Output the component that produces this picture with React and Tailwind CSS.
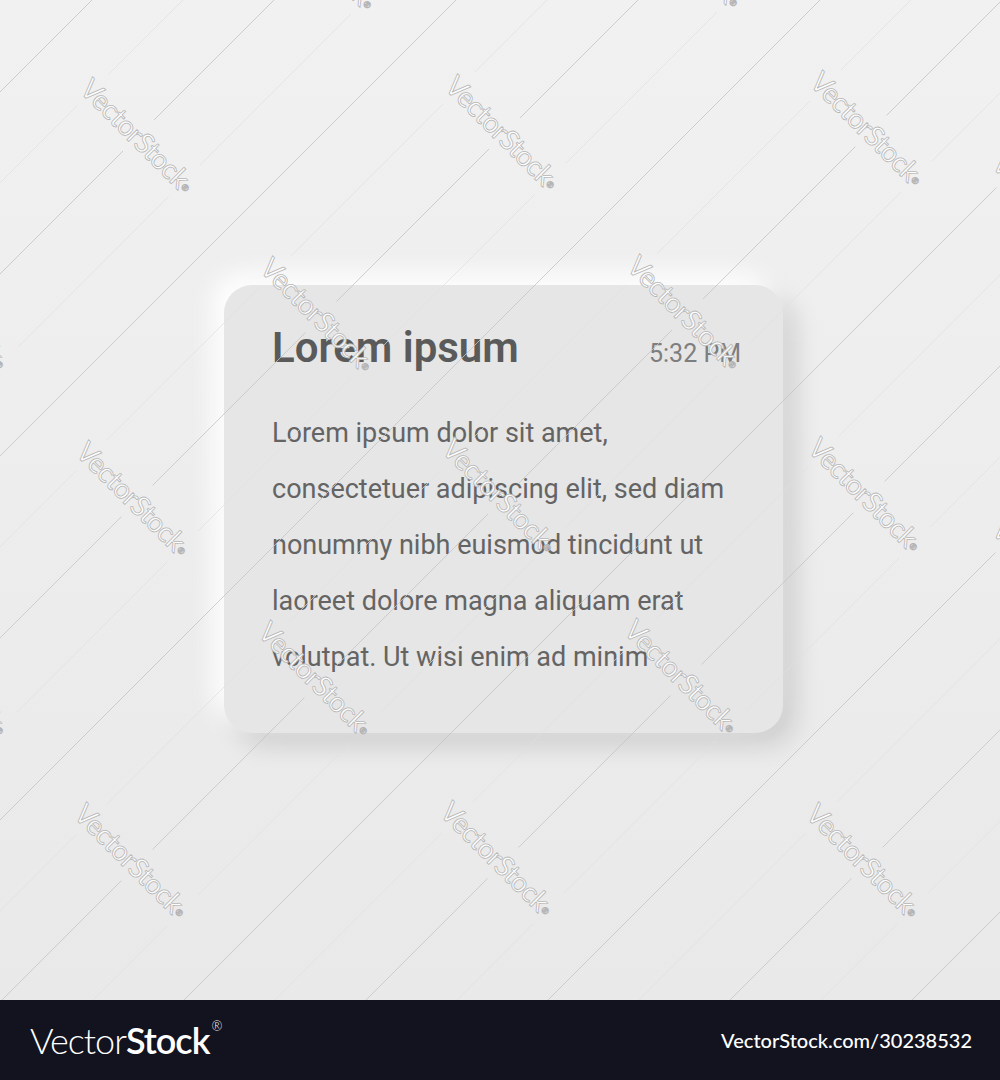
const marks = [
  { cls: "left-[320px] top-[-48px]", cx: 320, cy: -48 },
  { cls: "left-[686px] top-[-50px]", cx: 686, cy: -50 },
  { cls: "left-[138px] top-[135px]", cx: 138, cy: 135 },
  { cls: "left-[503px] top-[132px]", cx: 503, cy: 132 },
  { cls: "left-[868px] top-[128px]", cx: 868, cy: 128 },
  { cls: "left-[-48px] top-[312px]", cx: -48, cy: 312 },
  { cls: "left-[318px] top-[314px]", cx: 318, cy: 314 },
  { cls: "left-[685px] top-[312px]", cx: 685, cy: 312 },
  { cls: "left-[1050px] top-[210px]", cx: 1050, cy: 210 },
  { cls: "left-[134px] top-[498px]", cx: 134, cy: 498 },
  { cls: "left-[500px] top-[495px]", cx: 500, cy: 495 },
  { cls: "left-[866px] top-[494px]", cx: 866, cy: 494 },
  { cls: "left-[-48px] top-[678px]", cx: -48, cy: 678 },
  { cls: "left-[316px] top-[678px]", cx: 316, cy: 678 },
  { cls: "left-[682px] top-[676px]", cx: 682, cy: 676 },
  { cls: "left-[1050px] top-[576px]", cx: 1050, cy: 576 },
  { cls: "left-[132px] top-[860px]", cx: 132, cy: 860 },
  { cls: "left-[498px] top-[858px]", cx: 498, cy: 858 },
  { cls: "left-[864px] top-[860px]", cx: 864, cy: 860 },
];

const body = [
  "Lorem ipsum dolor sit amet,",
  "consectetuer adipiscing elit, sed diam",
  "nonummy nibh euismod tincidunt ut",
  "laoreet dolore magna aliquam erat",
  "volutpat. Ut wisi enim ad minim",
];

function Watermark() {
  const lines = [];
  for (let k = 0; k < 11; k++) lines.push(92 + 182 * k);

  return (
    <div className="pointer-events-none absolute inset-0 overflow-hidden">
      <svg width="1000" height="1000" viewBox="0 0 1000 1000" className="absolute inset-0">
        <defs>
          <mask id="gaps">
            <rect x="0" y="0" width="1000" height="1000" fill="white" />
            {marks.map((m, i) => (
              <rect
                key={i}
                x={m.cx - 92}
                y={m.cy - 22}
                width="184"
                height="44"
                fill="black"
                transform={`rotate(45 ${m.cx} ${m.cy})`}
              />
            ))}
          </mask>
        </defs>
        <g mask="url(#gaps)">
          {lines.map((s) => (
            <line key={"a" + s} x1={s} y1="0" x2={s - 1000} y2="1000" stroke="#c4c4c4" strokeWidth="0.8" />
          ))}
          {lines.map((s) => (
            <line key={"b" + s} x1={s + 91} y1="0" x2={s - 909} y2="1000" stroke="#e0e0e0" strokeWidth="0.7" />
          ))}
        </g>
      </svg>

      {marks.map((m, i) => (
        <span
          key={i}
          className={`absolute ${m.cls} -translate-x-1/2 -translate-y-1/2 rotate-45 whitespace-nowrap font-['Lato','Open_Sans',sans-serif] text-[28px] font-normal text-white/90 [-webkit-text-stroke:0.8px_#b5b5b5] tracking-[-0.8px]`}
        >
          VectorStock<sup className="text-[9px]">®</sup>
        </span>
      ))}
    </div>
  );
}

export default function App() {
  return (
    <div className="w-[1000px] h-[1080px] flex flex-col bg-[#ededed]">
      <div className="relative h-[1000px] bg-linear-to-b from-[#f1f1f1] to-[#e9e9e9] pt-[285px] pl-[224px]">
        {/* Card */}
        <div className="w-[559px] h-[448px] rounded-[28px] bg-[#e6e6e6] shadow-[-12px_-12px_24px_rgba(255,255,255,0.95),12px_12px_26px_rgba(0,0,0,0.13)] pl-[48px] pr-[42px] pt-[39px] font-['Roboto','Noto_Sans',sans-serif]">
          <div className="flex items-baseline justify-between">
            <h2 className="text-[42px] font-semibold text-[#5a5a5a] leading-[48px]">Lorem ipsum</h2>
            <span className="text-[25px] text-[#7e7e7e]">5:32 PM</span>
          </div>
          <div className="mt-[32px] text-[27px] text-[#646464] leading-[56px]">
            {body.map((t) => (
              <div key={t}>{t}</div>
            ))}
          </div>
        </div>
        <Watermark />
      </div>

      {/* Footer bar */}
      <div className="h-[80px] bg-[#12131f] flex items-center justify-between pl-[30px] pr-[28px]">
        <div className="flex items-start text-white font-['Lato','Open_Sans',sans-serif] text-[36px] leading-none tracking-[-1px]">
          <span className="font-light">Vector</span>
          <span className="font-semibold">Stock</span>
          <span className="text-[13px] mt-[-2px] ml-[2px] font-light">®</span>
        </div>
        <span className="text-white font-['Lato','Open_Sans',sans-serif] text-[20px] font-medium">VectorStock.com/30238532</span>
      </div>
    </div>
  );
}
